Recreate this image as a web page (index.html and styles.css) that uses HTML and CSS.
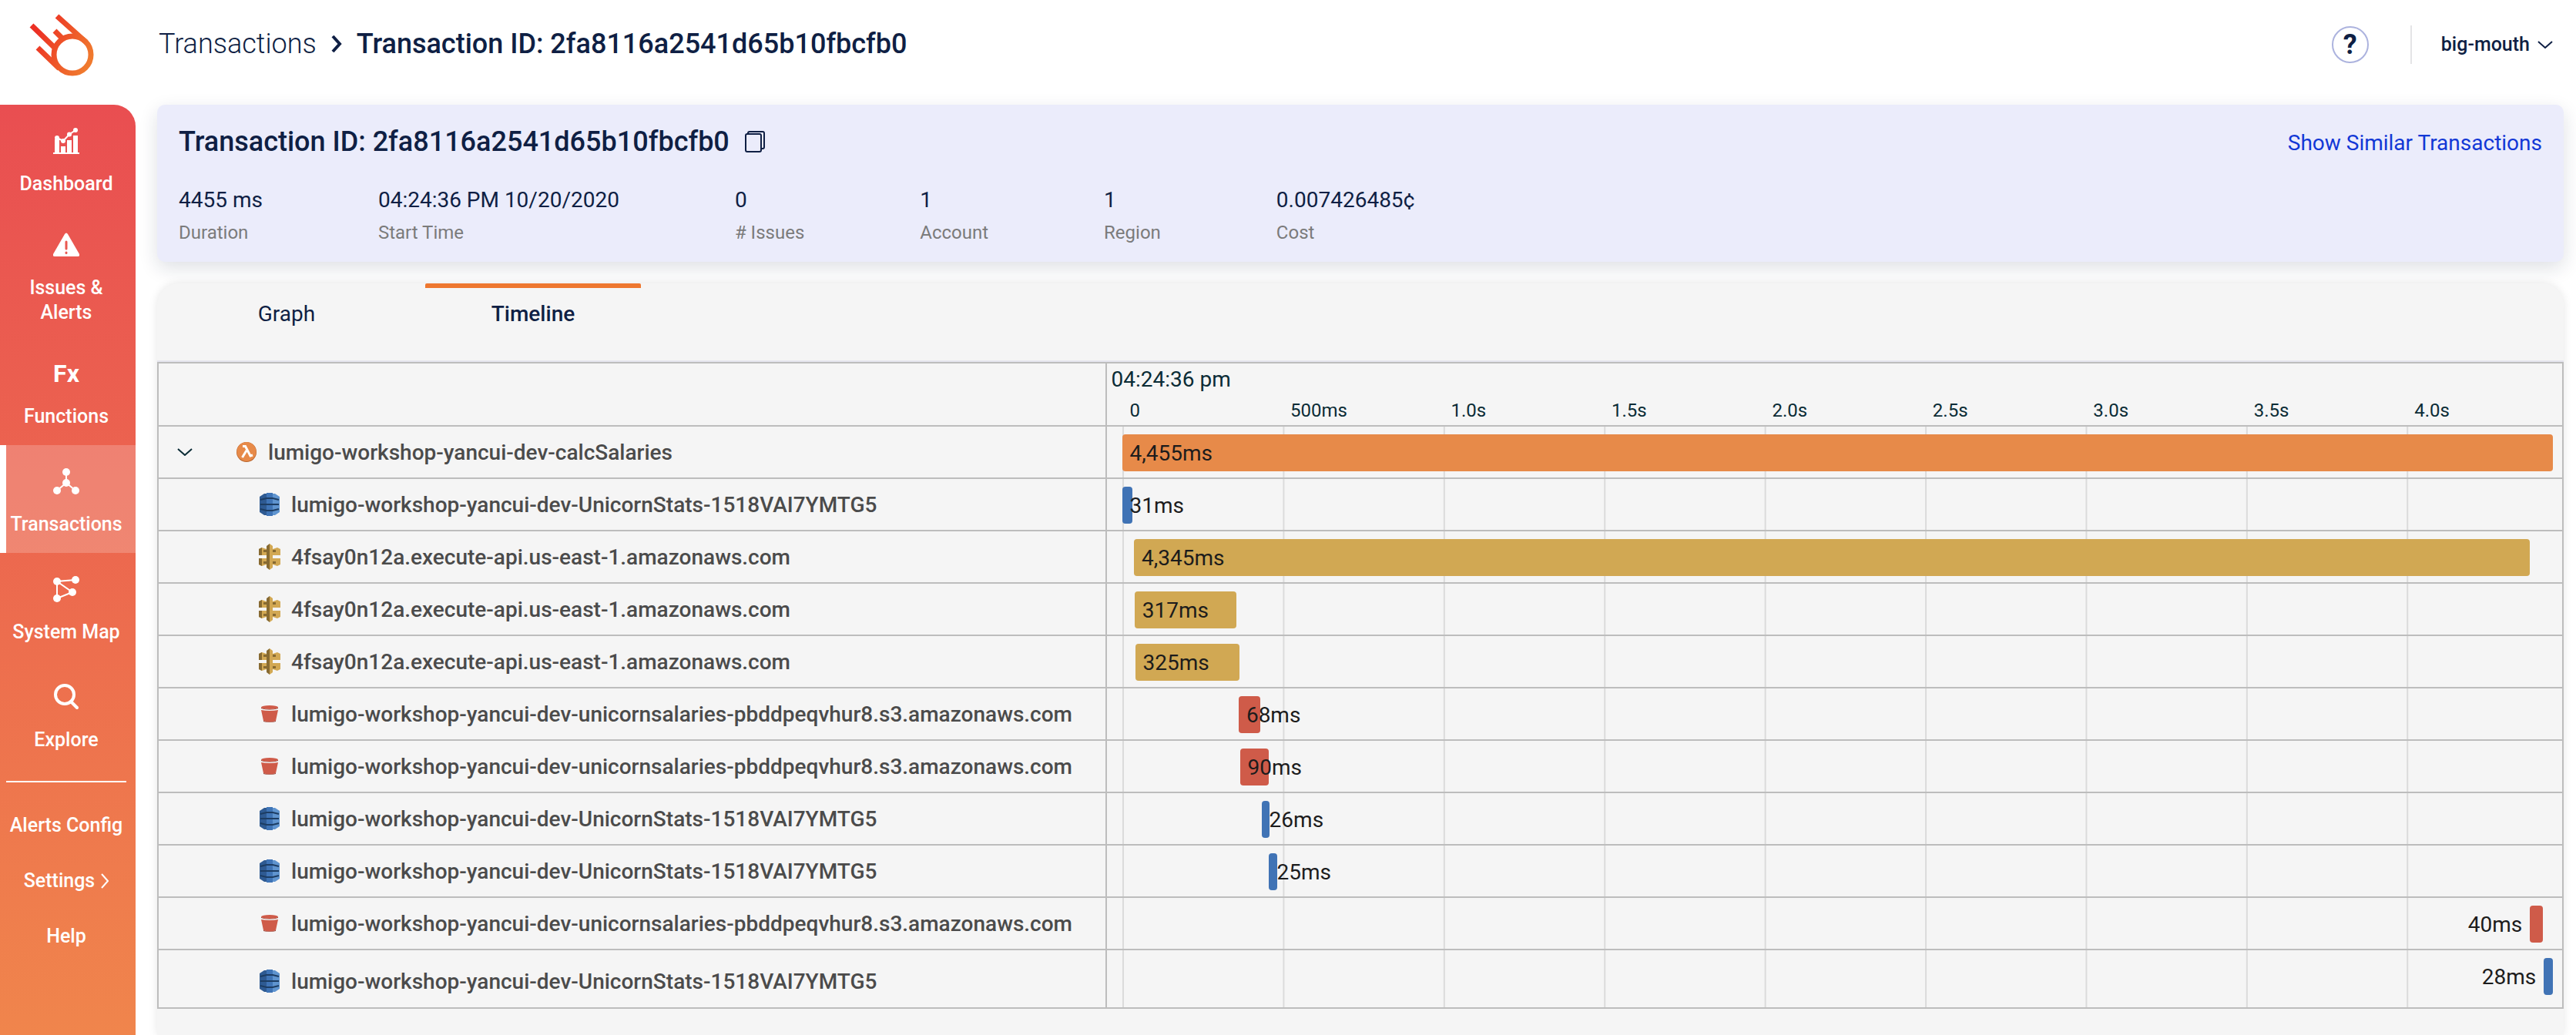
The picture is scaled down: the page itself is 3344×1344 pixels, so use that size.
FILE: index.html
```html
<!DOCTYPE html>
<html lang="en">
<head>
<meta charset="utf-8">
<meta name="viewport" content="width=device-width, initial-scale=1">
<title>Transaction ID: 2fa8116a2541d65b10fbcfb0</title>
<link rel="stylesheet" href="styles.css">
</head>
<body>
<svg class="sprite" aria-hidden="true">
  <symbol id="dynamodb" viewBox="0 0 26 30">
    <path fill="#2e5a92" d="M0 5 6 1h3v28H6l-6-4z"/>
    <path fill="#3f74b6" d="M9 0h8v30H9z"/>
    <path fill="#5f94cf" d="M17 1h3l6 4v20l-6 4h-3z"/>
    <path fill="none" stroke="#1d3d63" stroke-width="2" d="M1 9 9 7h8l8 2M1 15h24M1 21l8 2h8l8-2"/>
  </symbol>
  <symbol id="gateway" viewBox="0 0 28 34">
    <path fill="#d2a853" d="M4 5l6 2v8H0V7zM24 5l-6 2v8h10V7zM0 19h10v8l-6 2-4-2zM28 19H18v8l6 2 4-2z"/>
    <path fill="#876a32" d="M0 7l4-2v10H0zM0 19h4v10l-4-2zM6 8h4v3H6zM6 23h4v3H6zM18 8h4v3h-4zM18 23h4v3h-4zM10 3l4-3v34l-4-3z"/>
    <path fill="#d2a853" d="M14 0l4 3v28l-4 3z"/>
  </symbol>
  <symbol id="bucket" viewBox="0 0 22 22">
    <path fill="#cf5b49" d="M0 6q11 2 22 0l-3 14q-8 3-16 0z"/>
    <path fill="#8c3123" d="M3 20q8 3 16 0v1q-8 2-16 0z"/>
    <path fill="#8c3123" d="M0 3q11 4 22 0v1q-11 3-22 0z"/>
    <ellipse cx="11" cy="2.500" rx="11" ry="2.500" fill="#cf5b49"/>
  </symbol>
  <symbol id="lambda" viewBox="0 0 26 26">
    <circle cx="13" cy="13" r="13" fill="#b9652d"/>
    <circle cx="13" cy="12.500" r="12.500" fill="#e78a49"/>
    <path fill="none" stroke="#fff" stroke-width="3" d="M8 5.500h3.500L18 18l3-1M13 11 7.500 20"/>
  </symbol>
  <symbol id="chevron-down" viewBox="0 0 20 10">
    <path fill="none" stroke="currentColor" stroke-width="2" d="M1 1l9 8 9-8"/>
  </symbol>
</svg>

<div class="app">
  <header class="topbar">
    <a class="logo" href="#" aria-label="Home">
      <svg width="86" height="82" viewBox="37 17 86 82" aria-hidden="true">
        <defs>
          <linearGradient id="comet" gradientUnits="userSpaceOnUse" x1="48" y1="40" x2="118" y2="76">
            <stop offset="0" stop-color="#ec3024"/><stop offset="1" stop-color="#f07a2e"/>
          </linearGradient>
        </defs>
        <g fill="none" stroke="url(#comet)" stroke-width="7">
          <circle cx="94" cy="71" r="24"/>
          <path d="M74 21l38 34M41 33l31 30M71 40l10 10M49 62l28 27"/>
        </g>
      </svg>
    </a>
    <nav class="crumbs" aria-label="Breadcrumb">
      <a class="crumb-link" href="#">Transactions</a>
      <svg width="16" height="24" viewBox="0 0 16 24" aria-hidden="true"><path fill="none" stroke="currentColor" stroke-width="4" d="M3 2l9 10-9 10"/></svg>
      <h1 class="crumb-title">Transaction ID: 2fa8116a2541d65b10fbcfb0</h1>
    </nav>
    <div class="account">
      <button class="help" type="button" aria-label="Help">?</button>
      <button class="user" type="button">big-mouth <svg width="20" height="10" aria-hidden="true"><use href="#chevron-down"/></svg></button>
    </div>
  </header>

  <nav class="sidebar" aria-label="Main">
    <a class="nav-item nav-item-tight" href="#">
      <svg class="nav-icon" viewBox="0 0 34 34" aria-hidden="true"><path d="M0 32h34v2H0zM2 15h6v18H2zM10 24h6v9h-6zM18 16h6v17h-6zM26 10h6v23h-6z"/><circle cx="5" cy="13" r="3"/><circle cx="13" cy="17" r="3"/><circle cx="21" cy="8.500" r="3"/><circle cx="29" cy="3" r="3"/><path class="wire" d="M5 13l8 4 8-8.500L29 3"/></svg>
      <span>Dashboard</span>
    </a>
    <a class="nav-item nav-item-tight" href="#">
      <svg class="nav-icon" viewBox="0 0 34 34" aria-hidden="true"><path d="M15 3q2-3 4 0l15 26q1 3-2 3H2q-3 0-2-3z"/><path fill="none" stroke="#ea5850" stroke-width="3" stroke-linecap="round" d="M17 13v9M17 27v.5"/></svg>
      <span>Issues &amp; Alerts</span>
    </a>
    <a class="nav-item" href="#">
      <span class="nav-icon nav-glyph" aria-hidden="true">Fx</span>
      <span>Functions</span>
    </a>
    <a class="nav-item nav-item-active" href="#" aria-current="page">
      <svg class="nav-icon" viewBox="0 0 34 34" aria-hidden="true"><path class="wire" d="M17 5v14L5 29M17 19l12 10"/><circle cx="17" cy="5" r="5"/><circle cx="17" cy="19" r="5"/><circle cx="5" cy="29" r="5"/><circle cx="29" cy="29" r="5"/></svg>
      <span>Transactions</span>
    </a>
    <a class="nav-item" href="#">
      <svg class="nav-icon" viewBox="0 0 34 34" aria-hidden="true"><path class="wire" d="M29 5L5 7v22l20-8L5 7"/><circle cx="5" cy="7" r="5"/><circle cx="29" cy="5" r="5"/><circle cx="25" cy="21" r="5"/><circle cx="5" cy="29" r="5"/></svg>
      <span>System Map</span>
    </a>
    <a class="nav-item" href="#">
      <svg class="nav-icon" viewBox="0 0 34 34" aria-hidden="true"><g fill="none" stroke="#fff" stroke-width="4"><circle cx="15" cy="14" r="12"/><path stroke-linecap="round" d="M23 23l8 8"/></g></svg>
      <span>Explore</span>
    </a>
    <div class="nav-minor">
      <a href="#">Alerts Config</a>
      <a href="#">Settings <svg width="10" height="20" viewBox="0 0 10 20" aria-hidden="true"><path fill="none" stroke="#fff" stroke-width="2" d="M1 1l8 9-8 9"/></svg></a>
      <a href="#">Help</a>
    </div>
  </nav>

  <main class="content">
    <section class="summary">
      <div class="summary-head">
        <h2 class="summary-title">Transaction ID: 2fa8116a2541d65b10fbcfb0</h2>
        <button class="copy" type="button" aria-label="Copy transaction ID"><svg width="26" height="28" viewBox="0 0 26 28" aria-hidden="true"><g fill="none" stroke="currentColor" stroke-width="2"><rect x="1" y="4" width="20" height="23" rx="2"/><path d="M4 4V3q0-2 2-2h17q2 0 2 2v18q0 2-2 2h-2"/></g></svg></button>
        <a class="similar" href="#">Show Similar Transactions</a>
      </div>
      <dl class="facts">
        <div><dt>Duration</dt><dd>4455 ms</dd></div>
        <div><dt>Start Time</dt><dd>04:24:36 PM 10/20/2020</dd></div>
        <div><dt># Issues</dt><dd>0</dd></div>
        <div><dt>Account</dt><dd>1</dd></div>
        <div><dt>Region</dt><dd>1</dd></div>
        <div><dt>Cost</dt><dd>0.007426485¢</dd></div>
      </dl>
    </section>

    <section class="panel">
      <div class="tabs" role="tablist">
        <button class="tab" type="button" role="tab" aria-selected="false">Graph</button>
        <button class="tab tab-active" type="button" role="tab" aria-selected="true">Timeline</button>
      </div>
      <table class="timeline">
        <colgroup><col class="col-name"><col></colgroup>
        <thead>
          <tr>
            <th class="head-name" aria-label="Resource"></th>
            <th class="head-time">
              <div class="head-date">04:24:36 pm</div>
              <div class="ticks"><span>0</span><span>500ms</span><span>1.0s</span><span>1.5s</span><span>2.0s</span><span>2.5s</span><span>3.0s</span><span>3.5s</span><span>4.0s</span></div>
            </th>
          </tr>
        </thead>
        <tbody>
          <tr>
            <td class="name"><div class="resource resource-root"><button class="toggle" type="button" aria-label="Collapse"><svg width="20" height="10" aria-hidden="true"><use href="#chevron-down"/></svg></button><span class="icon"><svg width="26" height="26" aria-hidden="true"><use href="#lambda"/></svg></span><span class="label">lumigo-workshop-yancui-dev-calcSalaries</span></div></td>
            <td class="track"><div class="lane"><div class="bar orange" style="margin-left:0;width:100%"><span>4,455ms</span></div></div></td>
          </tr>
          <tr>
            <td class="name"><div class="resource"><span class="icon"><svg width="26" height="30" aria-hidden="true"><use href="#dynamodb"/></svg></span><span class="label">lumigo-workshop-yancui-dev-UnicornStats-1518VAI7YMTG5</span></div></td>
            <td class="track"><div class="lane"><div class="bar blue" style="margin-left:0;width:0.7%"><span>31ms</span></div></div></td>
          </tr>
          <tr>
            <td class="name"><div class="resource"><span class="icon"><svg width="28" height="34" aria-hidden="true"><use href="#gateway"/></svg></span><span class="label">4fsay0n12a.execute-api.us-east-1.amazonaws.com</span></div></td>
            <td class="track"><div class="lane"><div class="bar gold" style="margin-left:0.83%;width:97.53%"><span>4,345ms</span></div></div></td>
          </tr>
          <tr>
            <td class="name"><div class="resource"><span class="icon"><svg width="28" height="34" aria-hidden="true"><use href="#gateway"/></svg></span><span class="label">4fsay0n12a.execute-api.us-east-1.amazonaws.com</span></div></td>
            <td class="track"><div class="lane"><div class="bar gold" style="margin-left:0.88%;width:7.12%"><span>317ms</span></div></div></td>
          </tr>
          <tr>
            <td class="name"><div class="resource"><span class="icon"><svg width="28" height="34" aria-hidden="true"><use href="#gateway"/></svg></span><span class="label">4fsay0n12a.execute-api.us-east-1.amazonaws.com</span></div></td>
            <td class="track"><div class="lane"><div class="bar gold" style="margin-left:0.92%;width:7.3%"><span>325ms</span></div></div></td>
          </tr>
          <tr>
            <td class="name"><div class="resource"><span class="icon"><svg width="22" height="22" aria-hidden="true"><use href="#bucket"/></svg></span><span class="label">lumigo-workshop-yancui-dev-unicornsalaries-pbddpeqvhur8.s3.amazonaws.com</span></div></td>
            <td class="track"><div class="lane"><div class="bar red" style="margin-left:8.15%;width:1.53%"><span>68ms</span></div></div></td>
          </tr>
          <tr>
            <td class="name"><div class="resource"><span class="icon"><svg width="22" height="22" aria-hidden="true"><use href="#bucket"/></svg></span><span class="label">lumigo-workshop-yancui-dev-unicornsalaries-pbddpeqvhur8.s3.amazonaws.com</span></div></td>
            <td class="track"><div class="lane"><div class="bar red" style="margin-left:8.24%;width:2.02%"><span>90ms</span></div></div></td>
          </tr>
          <tr>
            <td class="name"><div class="resource"><span class="icon"><svg width="26" height="30" aria-hidden="true"><use href="#dynamodb"/></svg></span><span class="label">lumigo-workshop-yancui-dev-UnicornStats-1518VAI7YMTG5</span></div></td>
            <td class="track"><div class="lane"><div class="bar blue" style="margin-left:9.75%;width:0.58%"><span>26ms</span></div></div></td>
          </tr>
          <tr>
            <td class="name"><div class="resource"><span class="icon"><svg width="26" height="30" aria-hidden="true"><use href="#dynamodb"/></svg></span><span class="label">lumigo-workshop-yancui-dev-UnicornStats-1518VAI7YMTG5</span></div></td>
            <td class="track"><div class="lane"><div class="bar blue" style="margin-left:10.28%;width:0.56%"><span>25ms</span></div></div></td>
          </tr>
          <tr>
            <td class="name"><div class="resource"><span class="icon"><svg width="22" height="22" aria-hidden="true"><use href="#bucket"/></svg></span><span class="label">lumigo-workshop-yancui-dev-unicornsalaries-pbddpeqvhur8.s3.amazonaws.com</span></div></td>
            <td class="track"><div class="lane lane-end"><span>40ms</span><div class="bar red" style="margin-right:0.7%;width:0.9%"></div></div></td>
          </tr>
          <tr>
            <td class="name"><div class="resource"><span class="icon"><svg width="26" height="30" aria-hidden="true"><use href="#dynamodb"/></svg></span><span class="label">lumigo-workshop-yancui-dev-UnicornStats-1518VAI7YMTG5</span></div></td>
            <td class="track"><div class="lane lane-end"><span>28ms</span><div class="bar blue" style="margin-right:0;width:0.63%"></div></div></td>
          </tr>
        </tbody>
      </table>
    </section>
  </main>
</div>
</body>
</html>
```
FILE: styles.css
```css
* { box-sizing: border-box; }

body {
  margin: 0;
  background: #fff;
  color: #0f1f44;
  font-family: Roboto, "Liberation Sans", sans-serif;
  font-size: 28px;
  line-height: 32px;
}

a { color: inherit; text-decoration: none; }
button { border: 0; padding: 0; background: none; color: inherit; font: inherit; cursor: pointer; }
svg { display: block; flex: none; }
h1, h2, dl, dd { margin: 0; }
.sprite { position: absolute; width: 0; height: 0; }

.app {
  display: grid;
  grid-template: auto 1fr / 176px minmax(0, 1fr);
  min-height: 100vh;
}

/* Top bar */
.topbar {
  grid-column: 1 / -1;
  display: flex;
  align-items: center;
  height: 136px;
  padding: 0 30px 26px 37px;
}
.logo { width: 169px; padding-top: 6px; }
.crumbs { display: flex; align-items: center; gap: 18px; padding-top: 4px; }
.crumb-link { font-size: 36px; font-weight: 300; }
.crumb-title, .summary-title { font-size: 36px; font-weight: 500; }
.account { display: flex; align-items: center; margin-left: auto; padding-top: 6px; }
.help {
  width: 48px;
  height: 48px;
  border: 2px solid #acb3de;
  border-radius: 50%;
  font-size: 36px;
  font-weight: 700;
}
.user {
  display: flex;
  align-items: center;
  gap: 10px;
  height: 50px;
  margin-left: 54px;
  padding-left: 38px;
  border-left: 2px solid #e4e4e6;
  font-size: 25px;
  font-weight: 500;
}

/* Sidebar */
.sidebar {
  border-radius: 0 28px 0 0;
  background: linear-gradient(#e94e51, #f0854c);
  color: #fff;
  font-size: 25px;
  font-weight: 500;
  text-align: center;
}
.nav-item {
  display: flex;
  flex-direction: column;
  align-items: center;
  gap: 23px;
  padding: 30px 12px 21px 8px;
}
.nav-item-tight { padding-bottom: 16px; }
.nav-item-tight span { padding: 0 16px; }
.nav-item-active {
  padding-left: 0;
  border-left: 8px solid #fff;
  background: rgba(255, 255, 255, 0.2);
  background-clip: padding-box;
}
.nav-icon { width: 34px; height: 34px; fill: #fff; }
.nav-glyph { font-size: 32px; font-weight: 700; line-height: 34px; }
.wire { fill: none; stroke: #fff; stroke-width: 2; }
.nav-minor {
  display: flex;
  flex-direction: column;
  gap: 40px;
  margin: 16px 12px 0 8px;
  padding-top: 40px;
  border-top: 2px solid #fff;
}
.nav-minor a { display: flex; justify-content: center; align-items: center; gap: 8px; white-space: nowrap; }

/* Content */
.content {
  display: flex;
  flex-direction: column;
  gap: 28px;
  padding: 0 16px 0 28px;
}
.summary {
  padding: 32px 28px 22px;
  border-radius: 10px;
  background: #ebecfb;
  box-shadow: 0 8px 24px rgba(24, 32, 64, 0.14);
}
.summary-head { display: flex; align-items: center; }
.copy { margin-left: 20px; }
.similar { margin-left: auto; padding-top: 4px; color: #1238d6; line-height: 28px; }
.facts { display: flex; gap: 150px; padding-top: 44px; }
.facts div { display: flex; flex-direction: column-reverse; gap: 10px; }
.facts dt { color: #7b7b7b; font-size: 24px; }

.panel {
  flex: 1;
  border-radius: 28px 28px 0 0;
  background: #f5f5f5;
  box-shadow: 0 0 12px rgba(0, 0, 0, 0.1);
}
.tabs {
  display: flex;
  gap: 40px;
  height: 102px;
  padding: 0 28px;
  border-bottom: 2px solid #e5e5ee;
}
.tab {
  width: 280px;
  height: 74px;
  border-top: 6px solid transparent;
}
.tab-active { border-top-color: #ee772f; border-radius: 2px; font-weight: 500; }

/* Timeline */
.timeline {
  width: 100%;
  border: 2px solid #bdbdbd;
  border-spacing: 0;
  table-layout: fixed;
}
.col-name { width: 39.44%; }
th, td { padding: 0; border-bottom: 2px solid #bdbdbd; }
tbody tr:last-child td { border-bottom: 0; }
.head-name, .name { border-right: 2px solid #bdbdbd; }
.head-time { color: #0b2c36; font-weight: 400; text-align: left; }
.head-date { padding-left: 6px; line-height: 42px; }
.ticks {
  display: grid;
  grid-template-columns: repeat(9, calc(100% * 500 / 4455));
  padding: 0 12px 0 20px;
  overflow: hidden;
  font-size: 24px;
  line-height: 38px;
}
.ticks span { padding-left: 10px; }

.resource {
  display: flex;
  align-items: center;
  gap: 14px;
  padding-left: 130px;
  color: #4b4b4b;
  font-weight: 500;
}
.resource-root { padding-left: 22px; }
.toggle { width: 64px; padding-left: 2px; color: #0b2c36; }
.icon { display: flex; justify-content: center; width: 28px; }
.label { padding-top: 2px; }
tbody tr:last-child .name { padding-top: 6px; }

.track {
  padding: 10px 12px 8px 20px;
  background: linear-gradient(to right, #dbdbdb 2px, transparent 2px) content-box 0 0 / calc(100% * 500 / 4455) 100%;
  background-clip: border-box;
  color: #1c1c1c;
}
tbody tr:last-child .track { padding-bottom: 16px; }
.lane { display: flex; height: 48px; line-height: 50px; }
.lane-end { justify-content: flex-end; gap: 10px; }
.bar {
  flex: none;
  display: flex;
  border-radius: 4px;
  white-space: nowrap;
}
.bar span { flex: none; margin-left: 10px; }
.orange { background: #e78a49; }
.blue { background: #4073b5; }
.gold { background: #d1a853; }
.red { background: #cf5b49; }
```
